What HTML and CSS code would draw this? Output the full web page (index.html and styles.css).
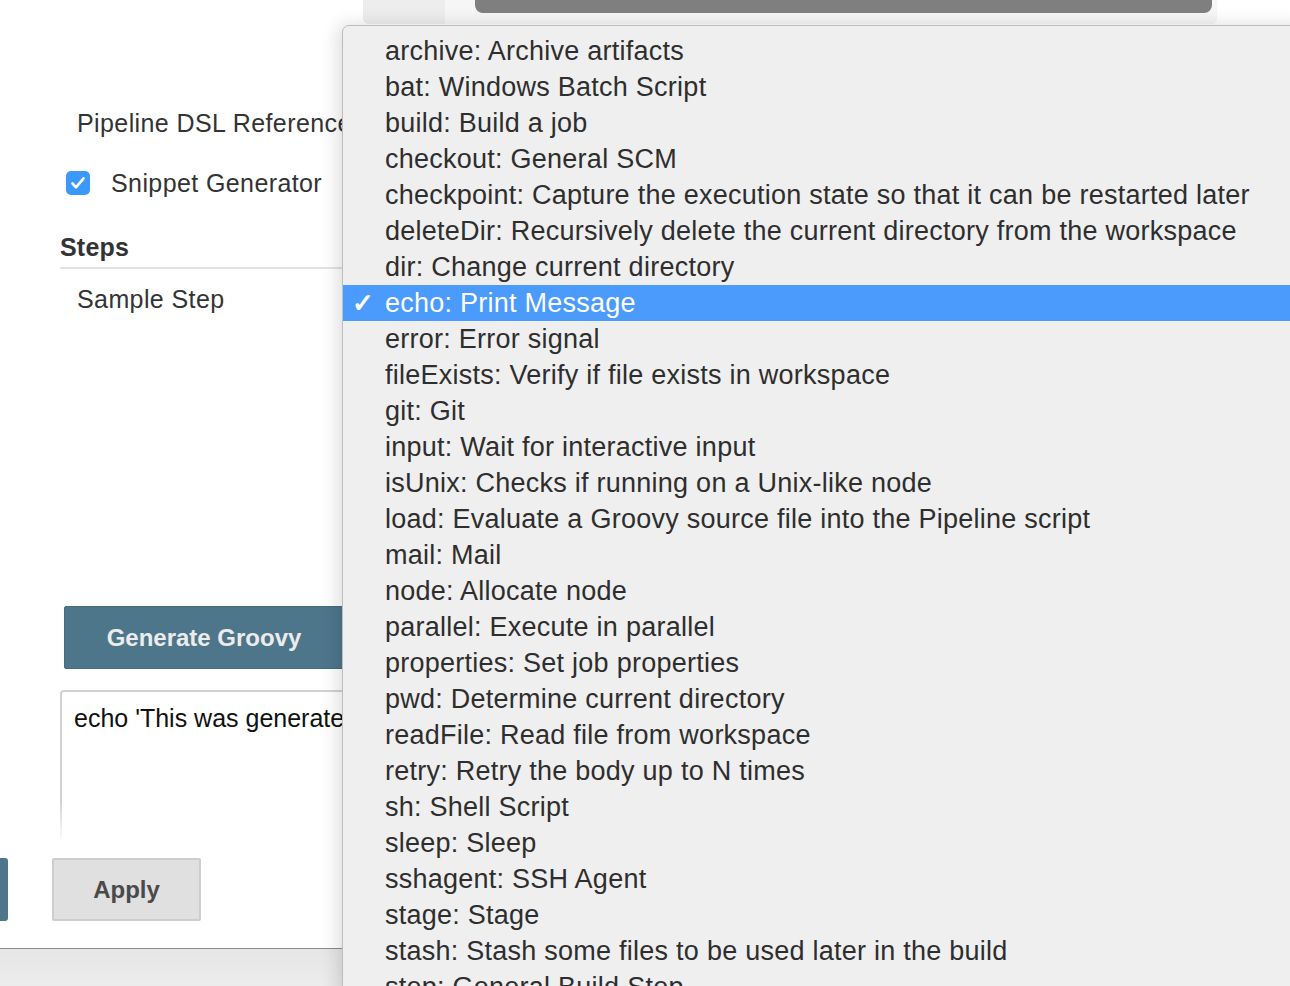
FILE: index.html
```html
<!DOCTYPE html>
<html lang="en">
<head>
<meta charset="utf-8">
<title>Snippet Generator</title>
<link rel="stylesheet" href="styles.css">
</head>
<body>
<div class="page">
  <div class="topbar">
    <div class="topbar-side"></div>
    <div class="topbar-main"><div class="scrollbar"></div></div>
  </div>

  <div class="side">
    <div class="link">Pipeline DSL Reference</div>
    <div class="check-row">
      <span class="checkbox"><svg viewBox="0 0 24 24" width="24" height="24"><path d="M6.5 12.5l3.5 3.8 7.5-9" fill="none" stroke="#fff" stroke-width="2.6" stroke-linecap="round" stroke-linejoin="round"/></svg></span>
      <span>Snippet Generator</span>
    </div>
    <div class="steps-title">Steps</div>
    <div class="link">Sample Step</div>

    <button class="generate">Generate Groovy</button>
    <div class="snippet">echo 'This was generated'</div>
  </div>

  <div class="bottom">
    <div class="fade"></div>
    <div class="actions">
      <div class="save"></div>
      <button class="apply">Apply</button>
    </div>
    <div class="footer"></div>
  </div>

  <ul class="menu">
    <li>archive: Archive artifacts</li>
    <li>bat: Windows Batch Script</li>
    <li>build: Build a job</li>
    <li>checkout: General SCM</li>
    <li>checkpoint: Capture the execution state so that it can be restarted later</li>
    <li>deleteDir: Recursively delete the current directory from the workspace</li>
    <li>dir: Change current directory</li>
    <li class="selected"><span class="tick">✓</span>echo: Print Message</li>
    <li>error: Error signal</li>
    <li>fileExists: Verify if file exists in workspace</li>
    <li>git: Git</li>
    <li>input: Wait for interactive input</li>
    <li>isUnix: Checks if running on a Unix-like node</li>
    <li>load: Evaluate a Groovy source file into the Pipeline script</li>
    <li>mail: Mail</li>
    <li>node: Allocate node</li>
    <li>parallel: Execute in parallel</li>
    <li>properties: Set job properties</li>
    <li>pwd: Determine current directory</li>
    <li>readFile: Read file from workspace</li>
    <li>retry: Retry the body up to N times</li>
    <li>sh: Shell Script</li>
    <li>sleep: Sleep</li>
    <li>sshagent: SSH Agent</li>
    <li>stage: Stage</li>
    <li>stash: Stash some files to be used later in the build</li>
    <li>step: General Build Step</li>
  </ul>
</div>
</body>
</html>
```

FILE: styles.css
```css
* { box-sizing: border-box; }

html, body {
  margin: 0;
  padding: 0;
  background: #fff;
}

body {
  font-family: "Liberation Sans", Helvetica, Arial, sans-serif;
  color: #333;
}

.page {
  position: relative;
  width: 1290px;
  height: 986px;
  overflow: hidden;
  display: flex;
  flex-direction: column;
}

.topbar {
  display: flex;
  height: 24px;
  width: 854px;
  margin-left: 363px;
  background: #f0f0f0;
  border-radius: 0 0 6px 6px;
  flex-shrink: 0;
}

.topbar-side {
  width: 82px;
  background: #ededed;
  border-radius: 0 0 0 6px;
}

.topbar-main {
  flex: 1;
  background: #f6f6f6;
  padding: 0 5px 0 30px;
  border-radius: 0 0 6px 0;
}

.scrollbar {
  height: 13px;
  background: #7f7f7f;
  border-radius: 0 0 8px 8px;
}

.side {
  padding-left: 60px;
  display: flex;
  flex-direction: column;
  align-items: flex-start;
  font-size: 25px;
  letter-spacing: 0.4px;
  color: #333;
}

.link {
  padding-left: 17px;
  height: 30px;
  line-height: 30px;
  white-space: nowrap;
}

.side > .link:first-child {
  margin-top: 84px;
}

.check-row {
  display: flex;
  align-items: center;
  gap: 21px;
  height: 30px;
  line-height: 30px;
  margin-top: 30px;
  padding-left: 6px;
}

.checkbox {
  width: 24px;
  height: 24px;
  border-radius: 5px;
  background: #3b99fc;
  display: inline-flex;
}

.steps-title {
  margin-top: 34px;
  font-weight: bold;
  letter-spacing: 0.2px;
  height: 30px;
  line-height: 30px;
  width: 282px;
  border-bottom: 2px solid #e2e2e2;
  box-sizing: content-box;
  padding-bottom: 5px;
}

.steps-title + .link {
  margin-top: 15px;
}

.generate {
  margin-top: 292px;
  margin-left: 4px;
  width: 280px;
  height: 63px;
  background: #4e768b;
  border: 1px solid #466a7e;
  border-radius: 2px;
  color: #ececec;
  font-family: "Liberation Sans", Helvetica, Arial, sans-serif;
  font-weight: bold;
  font-size: 24px;
  padding: 0;
}

.snippet {
  margin-top: 21px;
  width: 300px;
  height: 160px;
  border: 2px solid #d2d2d2;
  border-radius: 4px;
  padding: 10px 12px;
  font-size: 25px;
  letter-spacing: 0;
  line-height: 32px;
  color: #111;
  white-space: nowrap;
  overflow: hidden;
}

.bottom {
  position: absolute;
  left: 0;
  right: 0;
  top: 800px;
  height: 186px;
  display: flex;
  flex-direction: column;
}

.fade {
  height: 48px;
  background: linear-gradient(to bottom, rgba(255,255,255,0), #fff 90%);
}

.actions {
  background: #fff;
  height: 100px;
  display: flex;
  align-items: flex-start;
  padding-top: 10px;
  gap: 44px;
}

.save {
  width: 8px;
  height: 63px;
  background: #4e768b;
  border-radius: 0 3px 3px 0;
}

.apply {
  width: 149px;
  height: 63px;
  background: #e0e0e0;
  border: 2px solid #cdcdcd;
  border-radius: 2px;
  color: #4a4a4a;
  font-family: "Liberation Sans", Helvetica, Arial, sans-serif;
  font-weight: bold;
  font-size: 24px;
  padding: 0;
}

.footer {
  flex: 1;
  border-top: 1px solid #8a8a8a;
  background: linear-gradient(to bottom, #e6e6e6, #ececec);
}

.menu {
  position: absolute;
  left: 342px;
  top: 25px;
  right: -20px;
  bottom: -40px;
  margin: 0;
  padding: 7px 0 0 0;
  list-style: none;
  background: #efefef;
  border: 1px solid #bdbdbd;
  border-top-left-radius: 7px;
  box-shadow: -4px 0 18px rgba(0,0,0,0.14);
  font-family: "Liberation Sans", Helvetica, Arial, sans-serif;
  font-size: 27px;
  letter-spacing: 0.25px;
  color: #2e2e2e;
}

.menu li {
  position: relative;
  height: 36px;
  line-height: 36px;
  padding-left: 42px;
  white-space: nowrap;
}

.menu li.selected {
  background: #4a9bfb;
  color: #fff;
}

.tick {
  position: absolute;
  left: 9px;
  top: 0;
  font-size: 26px;
  font-weight: bold;
}
```
